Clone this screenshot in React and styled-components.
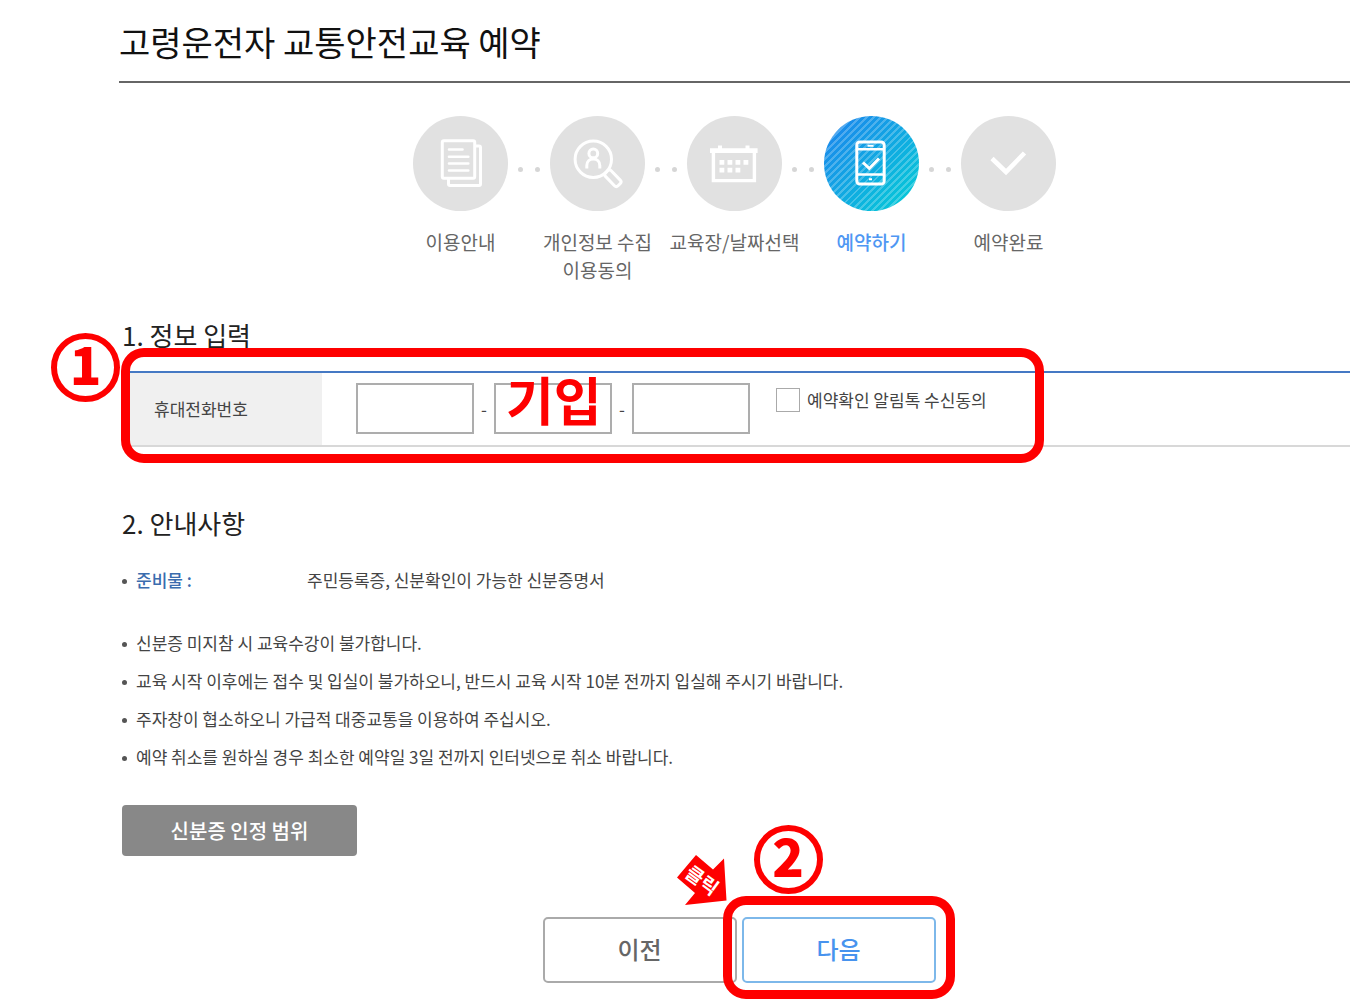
import React, { useState } from 'react';
import styled, { createGlobalStyle, css } from 'styled-components';

const RED = '#fe0000';

const GlobalStyle = createGlobalStyle`
  * {
    box-sizing: border-box;
  }

  body {
    margin: 0;
    background: #fff;
    color: #444;
    font-family: "Noto Sans CJK KR", "Noto Sans", sans-serif;
    font-size: 17px;
  }

  h1, h2, ul, ol, p {
    margin: 0;
    padding: 0;
    font-weight: 400;
    list-style: none;
  }

  button, input {
    font-family: inherit;
  }
`

const Page = styled.main`
  padding: 19px 22px 16px 119px;
`

const Title = styled.h1`
  padding-bottom: 16px;
  border-bottom: 2px solid #666;
  color: #111;
  font-size: 34px;
  line-height: 46px;
`

const StepList = styled.ol`
  display: flex;
  justify-content: center;
  margin-top: 33px;
`

const StepItem = styled.li`
  width: 137px;
  text-align: center;
`

const StepTrack = styled.div`
  display: flex;
  align-items: center;
  justify-content: space-between;
  padding: 0 6px;
`

const Dot = styled.span`
  width: 5px;
  height: 5px;
  margin-top: 11px;
  border-radius: 50%;
  background: #d6d6d6;
  visibility: ${props => props.$hidden ? 'hidden' : 'visible'};
`

const Circle = styled.span`
  width: 95px;
  height: 95px;
  border-radius: 50%;
  background: #e1e1e1;
  color: #fff;

  ${props => props.$active && css`
    background:
      repeating-linear-gradient(135deg, rgba(255, 255, 255, 0.24) 0 2px, transparent 2px 5px),
      linear-gradient(135deg, #1b89ec 10%, #06c8d8 90%);
  `}

  svg {
    display: block;
    fill: none;
    stroke: currentColor;
    stroke-width: 3;
  }
`

const StepLabel = styled.p`
  margin-top: 17px;
  color: ${props => props.$active ? '#4f97f3' : '#666'};
  font-size: 19px;
  font-weight: ${props => props.$active ? 500 : 400};
  line-height: 28px;
  white-space: pre;
`

const Section = styled.section`
  margin-top: ${props => props.$space}px;
  padding-left: 3px;
`

const Heading = styled.h2`
  color: #222;
  font-size: 26px;
  line-height: 36px;
`

const FormArea = styled.div`
  position: relative;
  margin-top: 18px;
`

const FormTable = styled.table`
  width: 100%;
  border-top: 2px solid #4579c4;
  border-bottom: 2px solid #d8d8d8;
  border-spacing: 0;

  th {
    width: 200px;
    padding: 0 0 2px 32px;
    background: #f0f0f0;
    font-weight: 400;
    text-align: left;
  }

  td {
    padding: 10px 0 11px 34px;
  }
`

const PhoneRow = styled.div`
  display: flex;
  align-items: center;
`

const PhoneInput = styled.input`
  width: 118px;
  height: 51px;
  padding: 0 12px;
  border: 2px solid #adadad;
  border-radius: 0;
  background: #fff;
  font-size: 17px;
`

const Dash = styled.span`
  width: 20px;
  text-align: center;
`

const InputCell = styled.span`
  position: relative;
  display: flex;
`

const Agree = styled.label`
  display: flex;
  align-items: center;
  align-self: flex-start;
  gap: 7px;
  margin: 5px 0 0 26px;
  line-height: 24px;
`

const Checkbox = styled.input`
  appearance: none;
  width: 24px;
  height: 24px;
  margin: 0;
  border: 1px solid #aaa;
  background: #fff;

  &:checked {
    background: #4579c4;
  }
`

const Notices = styled.ul`
  margin-top: 20px;
`

const Notice = styled.li`
  display: flex;
  align-items: center;
  line-height: 38px;
  margin-bottom: ${props => props.$last ? 25 : 0}px;

  &::before {
    content: '';
    width: 5px;
    height: 5px;
    margin: 3px 9px 0 0;
    border-radius: 50%;
    background: #555;
  }
`

const NoticeTerm = styled.strong`
  width: 171px;
  color: #3a6cae;
  font-weight: 500;
`

const IdButton = styled.button`
  width: 235px;
  height: 51px;
  margin-top: 29px;
  padding: 0;
  border: 0;
  border-radius: 4px;
  background: #888;
  color: #fff;
  font-size: 20px;
  font-weight: 500;
`

const Actions = styled.div`
  display: flex;
  justify-content: center;
  gap: 5px;
  margin-top: 61px;
  padding-left: 6px;
`

const ActionCell = styled.div`
  position: relative;
`

const ActionButton = styled.button`
  display: block;
  width: 194px;
  height: 66px;
  padding: 0 0 4px;
  border: 2px solid ${props => props.$primary ? '#7db8ea' : '#aaa'};
  border-radius: 5px;
  background: #fff;
  color: ${props => props.$primary ? '#4793ee' : '#666'};
  font-size: 24px;
  font-weight: 500;
`

// red guide marks laid over the form
const Frame = styled.div`
  position: absolute;
  border: 9px solid ${RED};
  border-radius: 23px;
  pointer-events: none;
`

const FormFrame = styled(Frame)`
  top: -23px;
  left: -1px;
  width: 923px;
  height: 115px;
`

const NextFrame = styled(Frame)`
  inset: -21px -19px -16px;
`

const Badge = styled.span`
  position: absolute;
  top: ${props => props.$top}px;
  left: ${props => props.$left}px;
  display: flex;
  align-items: center;
  justify-content: center;
  width: 69px;
  height: 69px;
  padding-bottom: 9px;
  border: 6px solid ${RED};
  border-radius: 50%;
  color: ${RED};
  font-size: 52px;
  font-weight: 900;
  line-height: 52px;
`

const FillMark = styled.span`
  position: absolute;
  top: -12px;
  left: 12px;
  color: ${RED};
  font-size: 52px;
  font-weight: 700;
  line-height: 56px;
  white-space: nowrap;
  pointer-events: none;
`

const ClickArrow = styled.svg`
  position: absolute;
  top: -63px;
  left: -66px;
  fill: ${RED};

  text {
    fill: #fff;
    font-size: 19px;
    font-weight: 700;
    text-anchor: middle;
  }
`

const Icon = ({ children }) => (
  <svg width="95" height="95" viewBox="0 0 95 95" aria-hidden="true">{children}</svg>
)

const GuideIcon = () => (
  <Icon>
    <rect x="29.3" y="24.8" width="32.4" height="37.4" rx="1.5" />
    <path d="M62 30h4a1.5 1.5 0 0 1 1.5 1.5v36.5a1.5 1.5 0 0 1-1.5 1.5H37a1.5 1.5 0 0 1-1.5-1.5v-5" />
    <path d="M36 33.5h13.5M36 40.7h19.3M36 47.5h19.3M36 54.5h19.3" strokeLinecap="round" strokeWidth="2.6" />
  </Icon>
)

const PrivacyIcon = () => (
  <Icon>
    <circle cx="43.3" cy="43.2" r="18.2" />
    <circle cx="43.3" cy="37.4" r="4.4" />
    <path d="M36.8 52.5v-3c0-4 2.6-6.5 6.5-6.500s6.500 2.500 6.500 6.500v3" />
    <rect x="54.300" y="58" width="18" height="8" rx="2.500" transform="rotate(46 62.800 61.600)" />
  </Icon>
)

const CalendarIcon = () => (
  <Icon>
    <path d="M26.400 35v29.600h41V35" strokeWidth="3.400" />
    <path d="M23 34.600h47.600" strokeWidth="4.600" />
    <path d="M33 29.500v4M60.500 29.500v4" strokeWidth="4" />
    <path d="M32.500 46.300h30M32.500 54.200h22" strokeWidth="4.800" strokeDasharray="4.800 3.200" />
  </Icon>
)

const PhoneIcon = () => (
  <Icon>
    <rect x="32.800" y="26" width="27.400" height="42" rx="3" />
    <path d="M33 33.300h27M33 58.500h27" strokeWidth="2.600" />
    <path d="M43.500 29.700h6M45 63.300h3" strokeWidth="2" />
    <path d="M39 46.500l6.300 6 9.700-10" />
  </Icon>
)

const DoneIcon = () => (
  <Icon>
    <path d="M31 42.500l14 13.500L63.500 37" strokeWidth="4.600" />
  </Icon>
)

const steps = [
  { label: '이용안내', icon: GuideIcon },
  { label: '개인정보 수집\n이용동의', icon: PrivacyIcon },
  { label: '교육장/날짜선택', icon: CalendarIcon },
  { label: '예약하기', icon: PhoneIcon, active: true },
  { label: '예약완료', icon: DoneIcon }
]

const notices = [
  '신분증 미지참 시 교육수강이 불가합니다.',
  '교육 시작 이후에는 접수 및 입실이 불가하오니, 반드시 교육 시작 10분 전까지 입실해 주시기 바랍니다.',
  '주자창이 협소하오니 가급적 대중교통을 이용하여 주십시오.',
  '예약 취소를 원하실 경우 최소한 예약일 3일 전까지 인터넷으로 취소 바랍니다.'
]

const Steps = () => (
  <StepList>
    {steps.map(({ label, icon: StepIcon, active }, i) => (
      <StepItem key={label} aria-current={active ? 'step' : undefined}>
        <StepTrack>
          <Dot $hidden={i === 0} />
          <Circle $active={active}><StepIcon /></Circle>
          <Dot $hidden={i === steps.length - 1} />
        </StepTrack>
        <StepLabel $active={active}>{label}</StepLabel>
      </StepItem>
    ))}
  </StepList>
)

const App = () => {
  const [phone, setPhone] = useState(['', '', '']);
  const [agree, setAgree] = useState(false);

  const updatePhone = (index, value) => {
    setPhone(phone.map((part, i) => i === index ? value : part));
  }

  const phoneInput = (index) => (
    <PhoneInput
      id={`phone${index}`}
      type="tel"
      aria-labelledby="phone-label"
      value={phone[index]}
      onChange={(e) => updatePhone(index, e.target.value)}
    />
  )

  return (
    <Page>
      <GlobalStyle />
      <Title>고령운전자 교통안전교육 예약</Title>
      <Steps />

      <Section $space={33}>
        <Heading>1. 정보 입력</Heading>
        <FormArea>
          <FormTable>
            <tbody>
              <tr>
                <th scope="row"><label id="phone-label" htmlFor="phone0">휴대전화번호</label></th>
                <td>
                  <PhoneRow>
                    {phoneInput(0)}
                    <Dash>-</Dash>
                    <InputCell>
                      {phoneInput(1)}
                      <FillMark>기입</FillMark>
                    </InputCell>
                    <Dash>-</Dash>
                    {phoneInput(2)}
                    <Agree>
                      <Checkbox type="checkbox" checked={agree} onChange={(e) => setAgree(e.target.checked)} />
                      예약확인 알림톡 수신동의
                    </Agree>
                  </PhoneRow>
                </td>
              </tr>
            </tbody>
          </FormTable>
          <FormFrame />
          <Badge $top={-38} $left={-71}>1</Badge>
        </FormArea>
      </Section>

      <Section $space={58}>
        <Heading>2. 안내사항</Heading>
        <Notices>
          <Notice $last>
            <NoticeTerm>준비물 :</NoticeTerm>
            주민등록증, 신분확인이 가능한 신분증명서
          </Notice>
          {notices.map(text => <Notice key={text}>{text}</Notice>)}
        </Notices>
        <IdButton type="button">신분증 인정 범위</IdButton>
        <Actions>
          <ActionButton type="button">이전</ActionButton>
          <ActionCell>
            <ActionButton type="button" $primary>다음</ActionButton>
            <NextFrame />
            <Badge $top={-92} $left={12}>2</Badge>
            <ClickArrow width="52" height="54" viewBox="0 0 52 54">
              <path d="M20 1l17 14.500L48 4.500l2.500 42L9 51l10-12L1 23.500z" />
              <text transform="translate(22 32) rotate(36)">클릭</text>
            </ClickArrow>
          </ActionCell>
        </Actions>
      </Section>
    </Page>
  )
}

export default App;
